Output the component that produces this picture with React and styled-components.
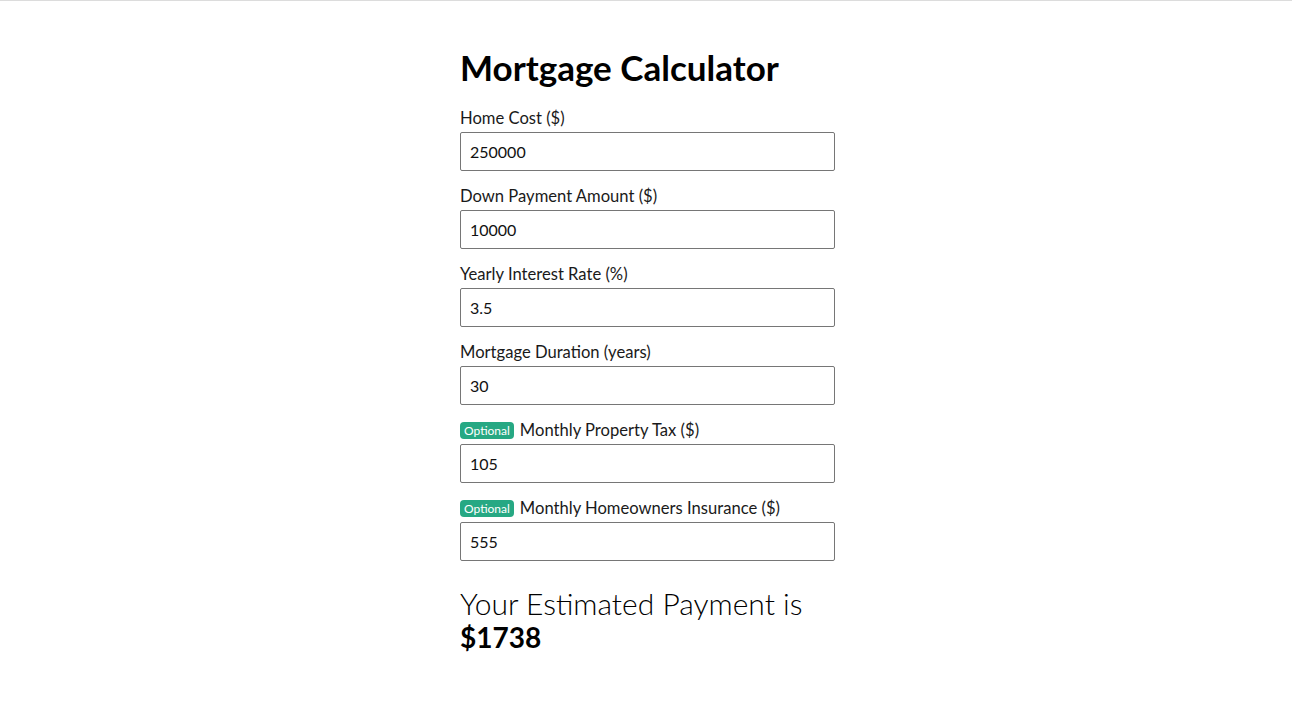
import React, { useState } from 'react'
import styled, { createGlobalStyle } from 'styled-components'

const GlobalStyle = createGlobalStyle`
    body {
        margin: 0;
        background: #fff;
        font-family: Lato, "Open Sans", sans-serif;
        color: #111;
    }
`

const Page = styled.div`
    border-top: 1px solid #dcdcdc;
    min-height: 709px;
`

const Calculator = styled.main`
    box-sizing: border-box;
    width: 380px;
    margin: 0 auto;
    padding: 46px 1px 0 4px;
`

const Title = styled.h1`
    margin: 0 0 20px;
    font-size: 35px;
    line-height: 40px;
    font-weight: 700;
    color: #000;
`

const Field = styled.div`
    display: flex;
    flex-direction: column;
    margin-bottom: 14px;
`

const Label = styled.label`
    display: flex;
    align-items: center;
    gap: 6px;
    font-size: 16.6px;
    line-height: 22px;
    margin-bottom: 3px;
    color: #1a1a1a;
`

const Badge = styled.span`
    background: #26a883;
    color: #fff;
    font-size: 12px;
    line-height: 17px;
    padding: 0 4px;
    border-radius: 4px;
`

const Input = styled.input`
    box-sizing: border-box;
    width: 100%;
    height: 39px;
    padding: 0 9px;
    border: 1px solid #767676;
    border-radius: 2px;
    font-family: Lato, "Open Sans", sans-serif;
    font-size: 16px;
    color: #111;
    outline: none;
`

const Result = styled.p`
    margin: 26px 0 0;
    font-size: 30px;
    line-height: 33px;
    font-weight: 300;
    color: #000;

    strong {
        font-weight: 700;
        font-size: 28px;
    }
`

const fields = [
    { key: 'cost', label: 'Home Cost ($)', value: '250000' },
    { key: 'down', label: 'Down Payment Amount ($)', value: '10000' },
    { key: 'rate', label: 'Yearly Interest Rate (%)', value: '3.5' },
    { key: 'years', label: 'Mortgage Duration (years)', value: '30' },
    { key: 'tax', label: 'Monthly Property Tax ($)', value: '105', optional: true },
    { key: 'ins', label: 'Monthly Homeowners Insurance ($)', value: '555', optional: true },
]

function App() {
    const [values, setValues] = useState(
        Object.fromEntries(fields.map(f => [f.key, f.value]))
    )

    return (
        <Page>
            <GlobalStyle />
            <Calculator>
                <Title>Mortgage Calculator</Title>
                {fields.map(f => (
                    <Field key={f.key}>
                        <Label htmlFor={f.key}>
                            {f.optional && <Badge>Optional</Badge>}
                            {f.label}
                        </Label>
                        <Input
                            id={f.key}
                            value={values[f.key]}
                            onChange={e => setValues({ ...values, [f.key]: e.target.value })}
                        />
                    </Field>
                ))}
                <Result>
                    Your Estimated Payment is <br />
                    <strong>$1738</strong>
                </Result>
            </Calculator>
        </Page>
    )
}

export default App
